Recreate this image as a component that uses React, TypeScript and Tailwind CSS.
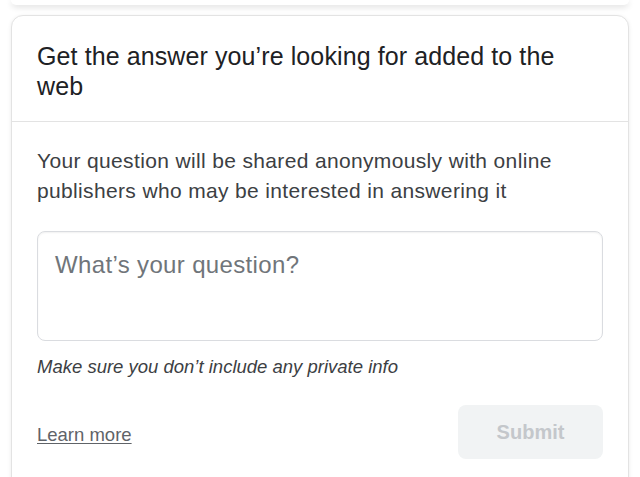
export default function App() {
  return (
    <div className="h-[477px] overflow-hidden bg-white" style={{ fontFamily: '"Liberation Sans", Arial, sans-serif' }}>
      <div className="mx-[11px] h-[5px] rounded-b-xl bg-white shadow-[0_2px_6px_rgba(0,0,0,0.14)]"></div>

      <div className="mx-[11px] mt-[10px] rounded-xl border border-[#e3e3e3] bg-white shadow-[0_1px_4px_rgba(0,0,0,0.08)]">
        <div className="border-b border-[#e3e3e3] pl-[25px] pr-[50px] pt-[25px] pb-[20px]">
          <h2 className="text-[25px] leading-[30px] tracking-[0.1px] text-[#202124]">
            Get the answer you’re looking for added to the web
          </h2>
        </div>

        <div className="px-[25px] pt-[24px] pb-[40px]">
          <p className="text-[21px] leading-[30px] tracking-[0.35px] text-[#3c4043]">
            Your question will be shared anonymously with online publishers who may be interested in answering it
          </p>

          <div className="mt-[25px] h-[110px] rounded-lg border border-[#dadce0] px-[17px] pt-[19px] shadow-[inset_0_1px_2px_rgba(0,0,0,0.06)]">
            <span className="text-[24px] leading-[28px] tracking-[0.35px] text-[#70757a]">What’s your question?</span>
          </div>

          <p className="mt-[14px] text-[18.5px] italic leading-[24px] text-[#3c4043]">
            Make sure you don’t include any private info
          </p>

          <div className="mt-[26px] flex items-center justify-between">
            <a className="mt-[6px] text-[18.5px] text-[#5f6368] underline underline-offset-2">Learn more</a>
            <button className="h-[54px] w-[145px] rounded-lg bg-[#f1f3f4] text-[20px] font-bold text-[#c4c7cb]">Submit</button>
          </div>
        </div>
      </div>
    </div>
  );
}
